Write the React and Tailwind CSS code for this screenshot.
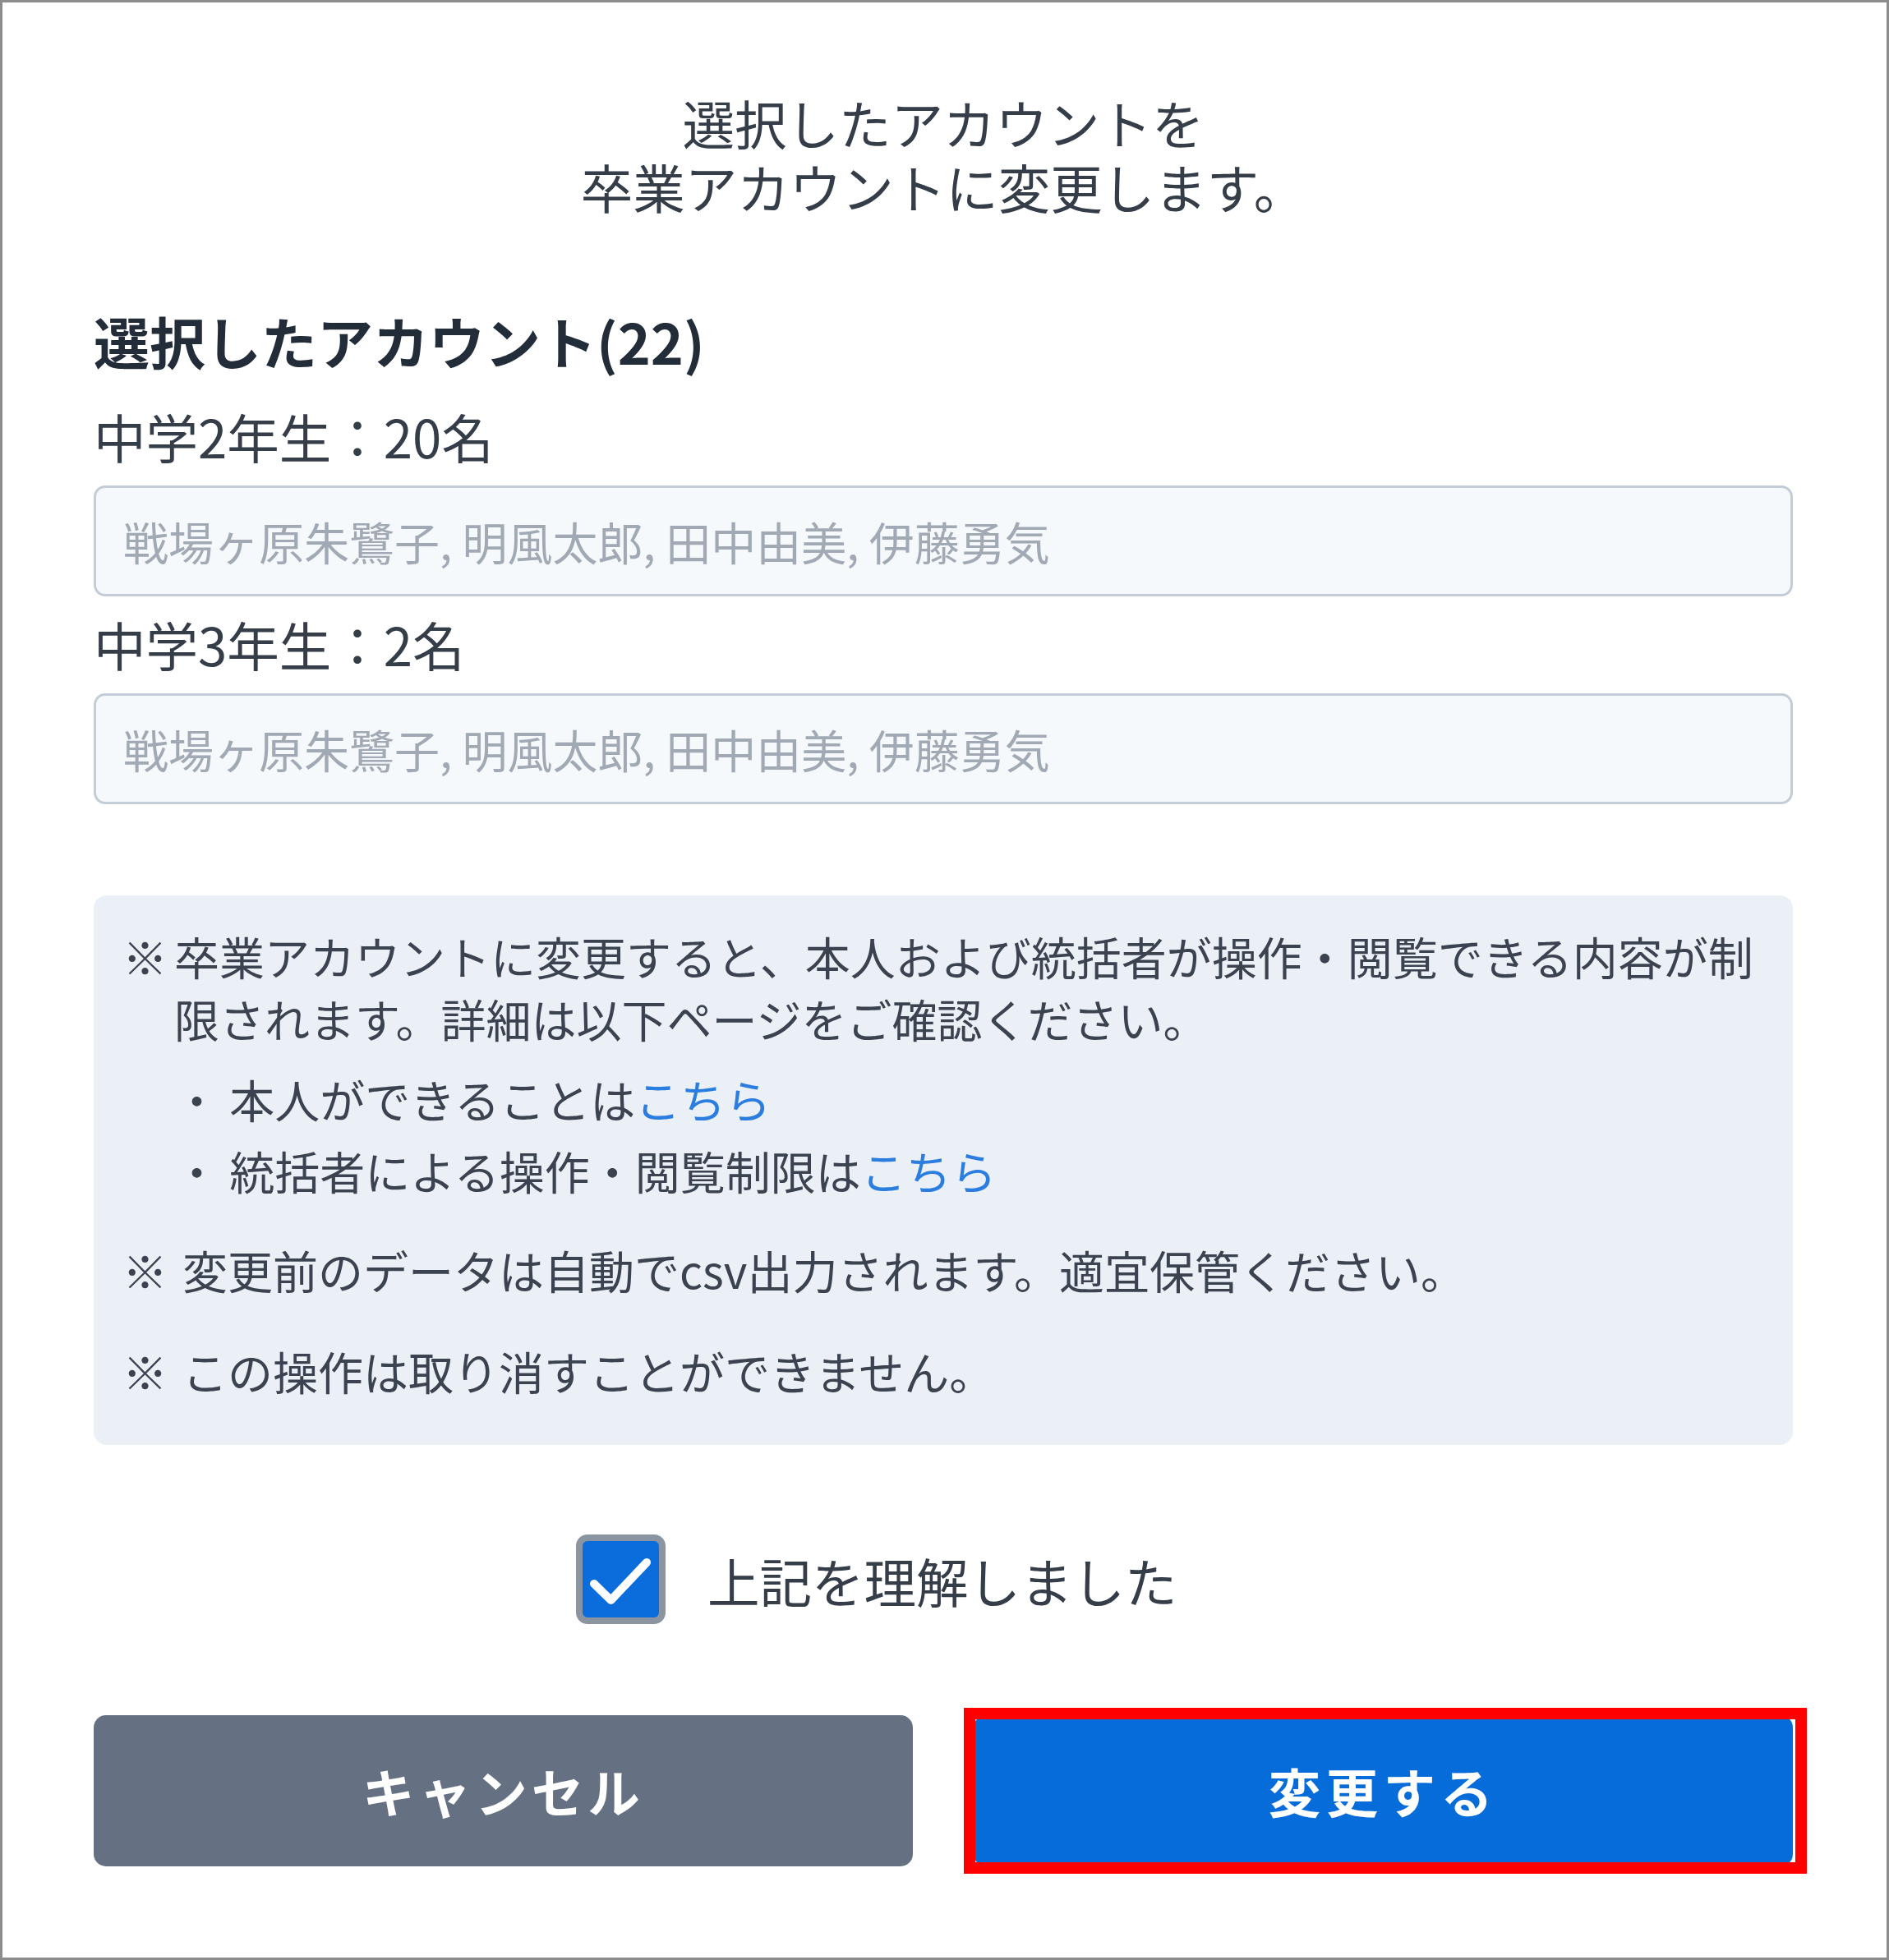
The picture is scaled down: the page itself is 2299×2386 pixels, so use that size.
import React from "react";

export default function App() {
  const font = "font-['Noto_Sans_CJK_JP','Noto_Sans',sans-serif]";
  return (
    <div
      className={`w-[2299px] h-[2386px] bg-white border-[3px] border-[#8c8c8c] pt-[106px] pl-[111px] pr-[114px] ${font}`}
    >
      <div className="text-center text-[63.5px] leading-[78px] text-[#353d49]">
        <div>選択したアカウントを</div>
        <div>卒業アカウントに変更します。</div>
      </div>

      <div className="mt-[106px] text-[68px] leading-[88px] font-bold text-[#232c39]">
        選択したアカウント(22)
      </div>

      <div className="mt-[31px] text-[63.5px] leading-[80px] text-[#353d49]">
        中学2年生：20名
      </div>
      <div className="mt-[21px] h-[135px] rounded-[14px] border-[3px] border-[#c3ccd7] bg-[#f6f9fc] pl-[33px] flex items-center text-[55px] text-[#a0a9b4] whitespace-nowrap">
        戦場ヶ原朱鷺子, 明風太郎, 田中由美, 伊藤勇気
      </div>

      <div className="mt-[17px] text-[63.5px] leading-[80px] text-[#353d49]">
        中学3年生：2名
      </div>
      <div className="mt-[21px] h-[135px] rounded-[14px] border-[3px] border-[#c3ccd7] bg-[#f6f9fc] pl-[33px] flex items-center text-[55px] text-[#a0a9b4] whitespace-nowrap">
        戦場ヶ原朱鷺子, 明風太郎, 田中由美, 伊藤勇気
      </div>

      <div className="mt-[111px] rounded-[16px] bg-[#ebf0f7] pt-[35px] pb-[53px] pl-[35px] pr-[28px] text-[55px] leading-[76px] text-[#3b4350]">
        <div className="flex gap-[8px]">
          <span className="shrink-0 font-bold">※</span>
          <div>
            <div>
              卒業アカウントに変更すると、本人および統括者が操作・閲覧できる内容が制限されます。詳細は以下ページをご確認ください。
            </div>
            <div className="mt-[22px]">
              ・ 本人ができることは<span className="text-[#2b7de0]">こちら</span>
            </div>
            <div className="mt-[11px]">
              ・ 統括者による操作・閲覧制限は<span className="text-[#2b7de0]">こちら</span>
            </div>
          </div>
        </div>
        <div className="mt-[45px] flex gap-[18px]">
          <span className="shrink-0 font-bold">※</span>
          <span>変更前のデータは自動でcsv出力されます。適宜保管ください。</span>
        </div>
        <div className="mt-[47px] flex gap-[18px]">
          <span className="shrink-0 font-bold">※</span>
          <span>この操作は取り消すことができません。</span>
        </div>
      </div>

      <div className="mt-[109px] pl-[587px] flex items-center gap-[51px]">
        <div className="w-[109px] h-[109px] shrink-0 rounded-[14px] border-[8px] border-[#8b95a2] bg-[#0b6cdb] flex items-center justify-center">
          <svg width="93" height="93" viewBox="0 0 93 93">
            <path
              d="M14 52 L34.5 72 L78 26"
              fill="none"
              stroke="#ffffff"
              strokeWidth="10"
              strokeLinecap="round"
              strokeLinejoin="round"
            />
          </svg>
        </div>
        <span className="text-[63.5px] leading-[80px] text-[#353d49]">
          上記を理解しました
        </span>
      </div>

      <div className="mt-[111px] grid grid-cols-2 gap-[74px]">
        <button className="h-[184px] rounded-[15px] bg-[#657183] text-white text-[63.5px] font-bold tracking-[0.08em] flex items-center justify-center">
          キャンセル
        </button>
        <div className="relative">
          <button className="w-full h-[184px] rounded-[15px] bg-[#066cd9] text-white text-[63.5px] font-bold tracking-[0.1em] flex items-center justify-center">
            変更する
          </button>
          <div className="absolute -left-[12px] -right-[17px] -top-[9px] -bottom-[9px] border-[14px] border-[#ff0000] pointer-events-none" />
        </div>
      </div>
    </div>
  );
}
